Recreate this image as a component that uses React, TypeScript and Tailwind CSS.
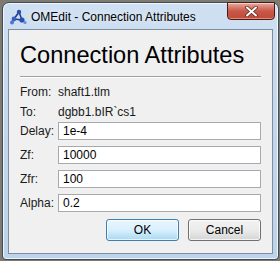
import React from "react";

const font = { fontFamily: '"Liberation Sans", Arial, sans-serif' };

function Row({ label, value }: { label: string; value: string }) {
  return (
    <div className="flex items-center h-[18px]">
      <div className="w-[38px] text-[12px] leading-[16px] text-[#1a1a1a]">{label}</div>
      <div className="flex-1 h-[18px] border border-[#a6a9ae] bg-white flex items-center pl-[4px] text-[12px] leading-[16px] text-black">
        {value}
      </div>
    </div>
  );
}

function Logo() {
  return (
    <svg width="18" height="16" viewBox="0 0 18 16">
      <g stroke="#1f3c8c" strokeWidth="1.6" fill="none">
        <line x1="10" y1="3" x2="5" y2="10" />
        <line x1="10" y1="3" x2="13" y2="11" />
        <line x1="5" y1="10" x2="13" y2="11" />
        <line x1="3" y1="13" x2="5" y2="10" />
      </g>
      <circle cx="10" cy="3" r="2.2" fill="#2a4fb0" />
      <circle cx="5" cy="10" r="2.4" fill="#3b5fc4" />
      <circle cx="13" cy="11" r="2.6" fill="#2a4fb0" />
      <circle cx="3" cy="13.5" r="2" fill="#4f73d6" />
      <circle cx="16" cy="13.5" r="1.6" fill="#6a8be0" />
    </svg>
  );
}

export default function App() {
  return (
    <div className="w-[280px] h-[261px] bg-[#7d7b70] overflow-hidden" style={font}>
      <div className="ml-[2px] mt-[2px] w-[277px] h-[258px] border border-[#3e4c5c] rounded-t-[7px] rounded-b-[4px] bg-gradient-to-b from-[#cfe0f2] via-[#c2d7ed] to-[#bcd3ec] shadow-[inset_0_0_0_1px_rgba(255,255,255,0.75)] flex flex-col">
        <div className="h-[26px] flex items-start shrink-0">
          <div className="pl-[6px] pt-[6px]">
            <Logo />
          </div>
          <div className="pl-[4px] pt-[6px] text-[12px] leading-[16px] text-black [text-shadow:0_0_6px_rgba(255,255,255,0.9)]">
            OMEdit - Connection Attributes
          </div>
          <div className="ml-auto mr-[3px] -mt-[1px] w-[48px] h-[18px] rounded-b-[4px] border border-[#4a1a16] bg-gradient-to-b from-[#e9a99b] via-[#c7584a] to-[#c24a36] shadow-[inset_0_1px_0_rgba(255,255,255,0.5),inset_0_-1px_0_rgba(255,180,160,0.6)] flex items-center justify-center">
            <svg width="13" height="11" viewBox="0 0 13 11">
              <path d="M2 1.5 L11 9.5 M11 1.5 L2 9.5" stroke="#5a2a24" strokeWidth="3.6" strokeLinecap="round" />
              <path d="M2 1.5 L11 9.5 M11 1.5 L2 9.5" stroke="#ffffff" strokeWidth="2" strokeLinecap="round" />
            </svg>
          </div>
        </div>
        <div className="mx-[5px] w-[265px] h-[225px] border border-[#7f8e9f] bg-[#f0f0f0] px-[11px] pt-[11px] flex flex-col">
          <div className="text-[23.6px] leading-[28px] text-black">Connection Attributes</div>
          <div className="mt-[7px] h-[2px] border-t border-[#a0a0a0] border-b border-b-white" />
          <div className="mt-[6px] flex h-[16px] items-center text-[12px] leading-[16px] text-[#1a1a1a]">
            <div className="w-[38px]">From:</div>
            <div>shaft1.tlm</div>
          </div>
          <div className="mt-[4px] flex h-[16px] items-center text-[12px] leading-[16px] text-[#1a1a1a]">
            <div className="w-[38px]">To:</div>
            <div>dgbb1.bIR`cs1</div>
          </div>
          <div className="mt-[2px] flex flex-col gap-[6px]">
            <Row label="Delay:" value="1e-4" />
            <Row label="Zf:" value="10000" />
            <Row label="Zfr:" value="100" />
            <Row label="Alpha:" value="0.2" />
          </div>
          <div className="mt-[7px] flex justify-end gap-[9px]">
            <button className="w-[73px] h-[22px] rounded-[3px] border border-[#3c7fb1] bg-gradient-to-b from-[#eaf6fd] via-[#d9f0fc] to-[#a7d9f5] shadow-[inset_0_0_0_1px_rgba(255,255,255,0.7)] text-[12px] text-black">
              OK
            </button>
            <button className="w-[73px] h-[22px] rounded-[3px] border border-[#707070] bg-gradient-to-b from-[#f2f2f2] via-[#ebebeb] to-[#d5d5d5] shadow-[inset_0_0_0_1px_rgba(255,255,255,0.7)] text-[12px] text-black">
              Cancel
            </button>
          </div>
        </div>
      </div>
    </div>
  );
}
